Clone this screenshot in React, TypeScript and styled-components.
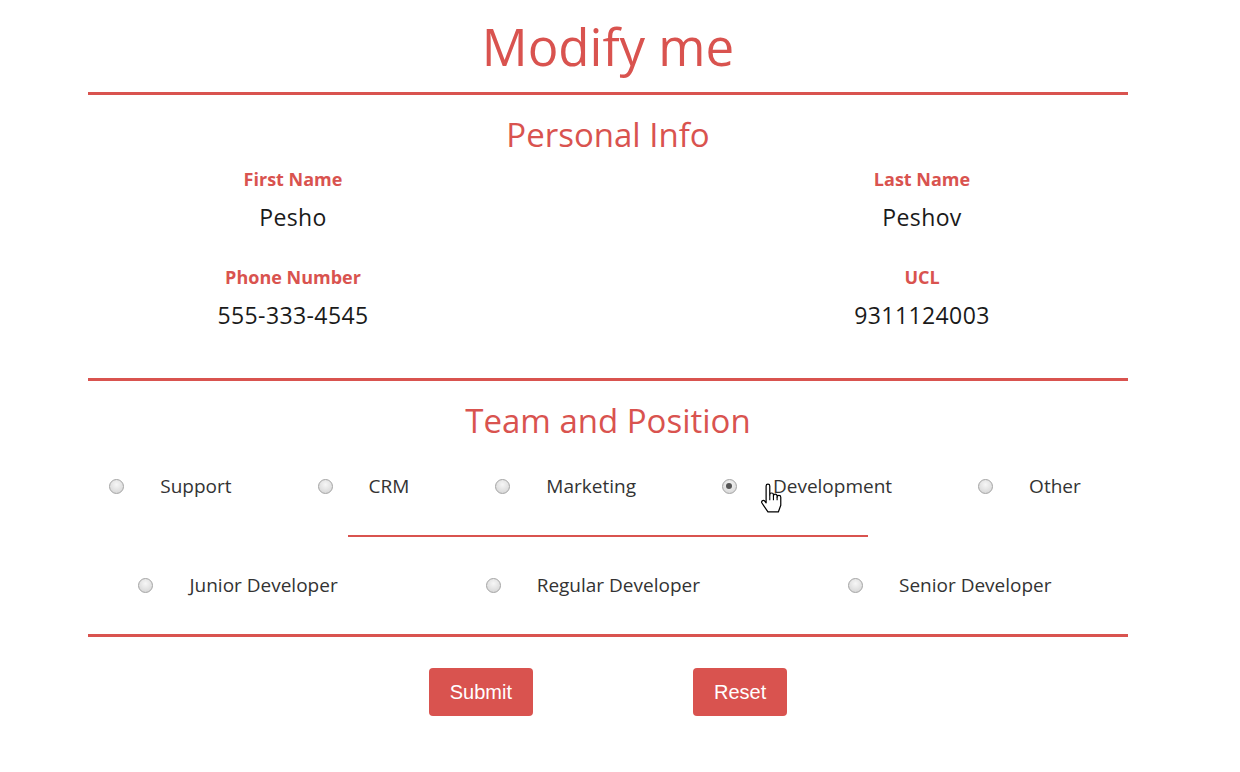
import React, { useState } from "react";
import styled, { createGlobalStyle } from "styled-components";

const RED = "#d9534f";

const GlobalStyle = createGlobalStyle`
  html, body {
    margin: 0;
    padding: 0;
    background: #ffffff;
  }
  body {
    font-family: "Open Sans", "Noto Sans", sans-serif;
    color: #333333;
  }
`;

const Page = styled.form`
  width: 1040px;
  margin: 0 0 0 88px;
  display: flex;
  flex-direction: column;
  align-items: stretch;
`;

const Title = styled.h1`
  margin: 14px 0 0;
  font-size: 51px;
  line-height: 64px;
  font-weight: 400;
  text-align: center;
  color: ${RED};
`;

const Rule = styled.hr<{ $short?: boolean; $top: number }>`
  border: none;
  border-top: ${(p) => (p.$short ? 2 : 3)}px solid ${RED};
  margin: ${(p) => p.$top}px auto 0;
  width: ${(p) => (p.$short ? "520px" : "100%")};
  height: 0;
`;

const SectionTitle = styled.h2`
  margin: 18px 0 0;
  font-size: 33px;
  line-height: 44px;
  font-weight: 400;
  text-align: center;
  color: ${RED};
`;

const InfoGrid = styled.div`
  display: grid;
  grid-template-columns: 410px 1fr 412px;
  row-gap: 33px;
  margin-top: 10px;
`;

const Field = styled.div<{ $col: number }>`
  grid-column: ${(p) => p.$col};
  display: flex;
  flex-direction: column;
  align-items: center;
  gap: 11px;
`;

const FieldLabel = styled.label`
  font-size: 18px;
  line-height: 24px;
  font-weight: 700;
  color: ${RED};
`;

const FieldValue = styled.span`
  font-size: 23px;
  line-height: 30px;
  font-weight: 400;
  color: #1a1a1a;
  letter-spacing: 0.4px;
`;

const RadioRow = styled.div<{ $gap: number; $top: number }>`
  display: flex;
  justify-content: center;
  align-items: center;
  gap: ${(p) => p.$gap}px;
  height: 30px;
  margin-top: ${(p) => p.$top}px;
  padding-right: 26px;
`;

const RadioOption = styled.label`
  display: flex;
  align-items: center;
  gap: 36px;
  font-size: 19px;
  color: #333333;
  cursor: pointer;
`;

const OptionText = styled.span`
  position: relative;
`;

const RadioInput = styled.input`
  appearance: none;
  margin: 0;
  width: 15px;
  height: 15px;
  border-radius: 50%;
  border: 1px solid #a4a4a4;
  background: radial-gradient(circle at 50% 35%, #f6f6f6 0%, #dedede 65%, #cdcdcd 100%);
  display: grid;
  place-items: center;
  &:checked::after {
    content: "";
    width: 6px;
    height: 6px;
    border-radius: 50%;
    background: #555555;
  }
`;

const Buttons = styled.div`
  display: flex;
  justify-content: center;
  gap: 160px;
  margin-top: 31px;
`;

const Button = styled.button`
  height: 48px;
  padding: 0 21px;
  border: none;
  border-radius: 4px;
  background: ${RED};
  color: #ffffff;
  font-family: "Liberation Sans", Arial, sans-serif;
  font-size: 20px;
  cursor: pointer;
`;

const Cursor = styled.svg`
  position: absolute;
  left: -13px;
  top: 10px;
  pointer-events: none;
`;

const HandCursor = () => (
  <Cursor width="22" height="31" viewBox="0 0 18 25">
    <path
      d="M5 2.2a1.5 1.5 0 0 1 3 0V9.5a1.5 1.5 0 0 1 3 0V10.5a1.5 1.5 0 0 1 3 0V11.5a1.5 1.5 0 0 1 3 0V18L15 23.5H6.5L1.6 16.2a1.4 1.4 0 0 1 2.1 -1.8L5 16Z"
      fill="#fff"
      stroke="#000"
      strokeWidth="1"
      strokeLinejoin="round"
    />
    <path d="M8 9.5V14M11 10.5V14M14 11.5V14" stroke="#000" strokeWidth="0.9" />
  </Cursor>
);

const teams = ["Support", "CRM", "Marketing", "Development", "Other"];
const positions = ["Junior Developer", "Regular Developer", "Senior Developer"];

export default function App() {
  const [team, setTeam] = useState("Development");
  const [position, setPosition] = useState("");

  return (
    <>
      <GlobalStyle />
      <Page onSubmit={(e) => e.preventDefault()}>
        <Title>Modify me</Title>
        <Rule $top={14} />

        <SectionTitle>Personal Info</SectionTitle>
        <InfoGrid>
          <Field $col={1}>
            <FieldLabel>First Name</FieldLabel>
            <FieldValue>Pesho</FieldValue>
          </Field>
          <Field $col={3}>
            <FieldLabel>Last Name</FieldLabel>
            <FieldValue>Peshov</FieldValue>
          </Field>
          <Field $col={1}>
            <FieldLabel>Phone Number</FieldLabel>
            <FieldValue>555-333-4545</FieldValue>
          </Field>
          <Field $col={3}>
            <FieldLabel>UCL</FieldLabel>
            <FieldValue>9311124003</FieldValue>
          </Field>
        </InfoGrid>

        <Rule $top={48} />
        <SectionTitle>Team and Position</SectionTitle>

        <RadioRow $gap={86} $top={28}>
          {teams.map((t) => (
            <RadioOption key={t}>
              <RadioInput
                type="radio"
                name="team"
                checked={team === t}
                onChange={() => setTeam(t)}
              />
              <OptionText>
                {t === "Development" && <HandCursor />}
                {t}
              </OptionText>
            </RadioOption>
          ))}
        </RadioRow>

        <Rule $short $top={34} />

        <RadioRow $gap={148} $top={33}>
          {positions.map((p) => (
            <RadioOption key={p}>
              <RadioInput
                type="radio"
                name="position"
                checked={position === p}
                onChange={() => setPosition(p)}
              />
              <OptionText>{p}</OptionText>
            </RadioOption>
          ))}
        </RadioRow>

        <Rule $top={34} />

        <Buttons>
          <Button type="submit">Submit</Button>
          <Button type="reset">Reset</Button>
        </Buttons>
      </Page>
    </>
  );
}
